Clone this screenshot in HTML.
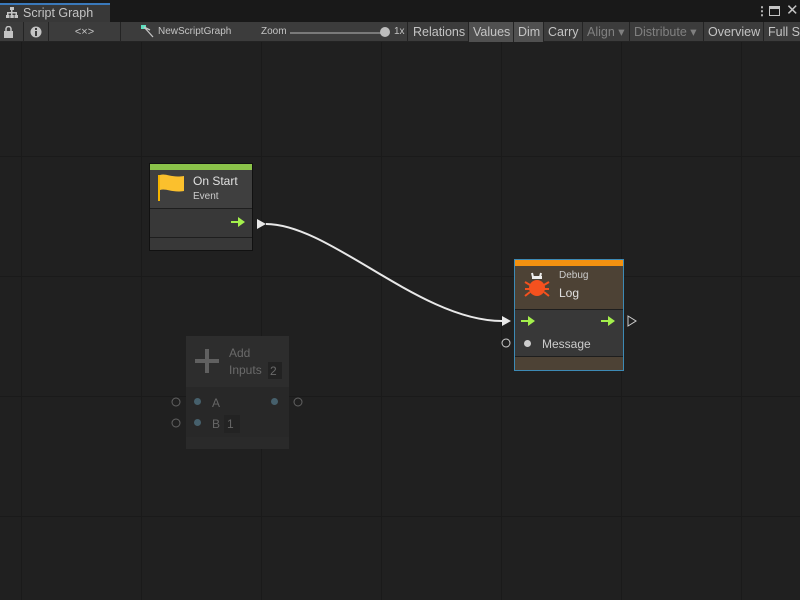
<!DOCTYPE html>
<html><head><meta charset="utf-8"><style>
*{margin:0;padding:0;box-sizing:border-box}
body{width:800px;height:600px;overflow:hidden;background:#202020;font-family:"Liberation Sans",sans-serif;position:relative}
.abs{position:absolute}
#tabbar{left:0;top:0;width:800px;height:22px;background:#191919}
#tab{left:0;top:3px;width:110px;height:19px;background:#383838;border-top:2px solid #3a79bb;color:#c4c4c4;font-size:12.5px;padding:1px 0 0 23px}
#tb{left:0;top:22px;width:800px;height:20px;background:#3c3c3c;border-bottom:1px solid #232323}
.tbt{position:absolute;top:0;height:20px;font-size:12.5px;color:#c4c4c4;line-height:20px;border-right:1px solid #242424;padding:0 0 0 4px}
.on{background:#505050}
.dis{color:#808080}
#canvas{left:0;top:42px;width:800px;height:558px;background-color:#202020;
background-image:linear-gradient(90deg,#1a1a1a 1px,transparent 1px),linear-gradient(#1a1a1a 1px,transparent 1px);
background-size:120px 120px;background-position:21px -6px}
.node{position:absolute;border:1px solid #111}
.t{position:absolute;font-size:12px;color:#e0e0e0}
</style></head><body>
<div id="tabbar" class="abs"></div>
<div id="tab" class="abs">Script Graph</div>
<svg class="abs" style="left:6px;top:7px" width="12" height="12"><g fill="#c4c4c4"><rect x="4" y="0" width="4" height="3"/><rect x="5" y="3" width="1.5" height="3"/><rect x="1" y="5" width="10" height="1.5"/><rect x="1" y="5" width="1.5" height="3"/><rect x="9.5" y="5" width="1.5" height="3"/><rect x="5" y="5" width="1.5" height="3"/><rect x="0" y="8" width="3.5" height="3"/><rect x="4.3" y="8" width="3.5" height="3"/><rect x="8.5" y="8" width="3.5" height="3"/></g></svg>
<div class="abs" style="left:756px;top:4px;color:#c4c4c4;font-size:12px;font-weight:bold">⋮</div>
<div class="abs" style="left:769px;top:6px;width:11px;height:10px;border:1.5px solid #c4c4c4;border-top-width:3px"></div>
<div class="abs" style="left:786px;top:1px;color:#c4c4c4;font-size:15px">✕</div>
<div id="tb" class="abs">
<div class="tbt" style="left:0;width:24px"><svg width="10" height="12" style="margin:4px 0 0 0"><rect x="0" y="5" width="9" height="7" fill="#c4c4c4"/><path d="M2 5V3a2.5 2.5 0 0 1 5 0v2" stroke="#c4c4c4" stroke-width="1.5" fill="none"/></svg></div>
<div class="tbt" style="left:24px;width:25px"><svg width="12" height="12" style="margin:4px 0 0 2px"><circle cx="6" cy="6" r="5.5" fill="#c4c4c4"/><rect x="5" y="5" width="2" height="5" fill="#3c3c3c"/><rect x="5" y="2" width="2" height="2" fill="#3c3c3c"/></svg></div>
<div class="tbt" style="left:49px;width:72px;text-align:center;font-size:11px;padding:0">&lt;×&gt;</div>
<div class="tbt" style="left:121px;width:287px;font-size:10px"></div>
<div class="abs" style="left:158px;top:0;line-height:20px;font-size:10px;color:#c4c4c4">NewScriptGraph</div>
<div class="abs" style="left:261px;top:0;line-height:20px;font-size:10px;color:#c4c4c4">Zoom</div>
<div class="abs" style="left:290px;top:10px;width:95px;height:2px;background:#7a7a7a"></div>
<div class="abs" style="left:380px;top:5px;width:10px;height:10px;border-radius:5px;background:#bdbdbd"></div>
<div class="abs" style="left:394px;top:0;line-height:20px;font-size:10px;color:#c4c4c4">1x</div>
<svg class="abs" style="left:141px;top:3px" width="14" height="13"><rect x="0" y="0" width="5" height="4" fill="#5ee0c0"/><path d="M3 2L12 12M3 2L9 5" stroke="#c4c4c4" stroke-width="1.3"/></svg>
<div class="tbt" style="left:409px;width:60px">Relations</div>
<div class="tbt on" style="left:469px;width:45px">Values</div>
<div class="tbt on" style="left:514px;width:30px">Dim</div>
<div class="tbt" style="left:544px;width:39px">Carry</div>
<div class="tbt dis" style="left:583px;width:47px">Align ▾</div>
<div class="tbt dis" style="left:630px;width:74px">Distribute ▾</div>
<div class="tbt" style="left:704px;width:60px">Overview</div>
<div class="tbt" style="left:764px;border:none">Full S</div>
</div>
<div id="canvas" class="abs"></div>

<svg class="abs" style="left:0;top:0" width="800" height="600">
<path d="M266 224 C 330 224, 420 321, 502 321" stroke="#e8e8e8" stroke-width="2" fill="none"/>
<path d="M257 219L266 224L257 229Z" fill="#e8e8e8"/>
<path d="M502 316L511 321L502 326Z" fill="#e8e8e8"/>
<path d="M628 316L636 321L628 326Z" fill="none" stroke="#ccc"/>
<circle cx="506" cy="343" r="4" fill="none" stroke="#ccc"/>
<g opacity="0.55"><circle cx="176" cy="402" r="4" fill="none" stroke="#999"/><circle cx="176" cy="423" r="4" fill="none" stroke="#999"/><circle cx="298" cy="402" r="4" fill="none" stroke="#999"/></g>
</svg>

<div class="node" style="left:149px;top:163px;width:104px;height:88px;background:#383838">
<div style="height:6px;background:#8bc34a"></div>
<div style="height:39px;background:#3f3f3f;border-bottom:1px solid #1e1e1e"></div>
<div style="height:29px;border-bottom:1px solid #1e1e1e"></div>
</div>
<svg class="abs" style="left:158px;top:173px" width="28" height="28"><path d="M1 2V28" stroke="#f5b400" stroke-width="2"/><path d="M2 2C8 0 13 5 26 3V18C14 20 8 15 2 17Z" fill="#fbc02d"/></svg>
<div class="t" style="left:193px;top:174px">On Start</div>
<div class="t" style="left:193px;top:191px;font-size:10px;color:#ccc">Event</div>
<svg class="abs" style="left:231px;top:217px" width="14" height="10"><path d="M0 4H7V0L14 5L7 10V6H0Z" fill="#a4f04c"/></svg>

<div class="node" style="left:514px;top:259px;width:110px;height:112px;background:#3a3a3a;border-color:#3d8ab5">
<div style="height:6px;background:#f39110"></div>
<div style="height:44px;background:#4d4235;border-bottom:1px solid #1e1e1e"></div>
<div style="height:47px;background:#383838;border-bottom:1px solid #1e1e1e"></div>
<div style="height:13px;background:#4d4235"></div>
</div>
<svg class="abs" style="left:523px;top:272px" width="28" height="26"><path d="M9 1L10 5M18 1L17 5" stroke="#eee" stroke-width="2"/><rect x="9" y="4" width="10" height="3" fill="#eee"/><ellipse cx="14" cy="16" rx="8" ry="8" fill="#f4511e"/><path d="M2 10L7 13M2 17H7M2 24L7 20M26 10L21 13M26 17H21M26 24L21 20" stroke="#f4511e" stroke-width="2"/></svg>
<div class="t" style="left:559px;top:270px;font-size:10px;color:#ccc">Debug</div>
<div class="t" style="left:559px;top:286px">Log</div>
<svg class="abs" style="left:521px;top:316px" width="14" height="10"><path d="M0 4H7V0L14 5L7 10V6H0Z" fill="#a4f04c"/></svg>
<svg class="abs" style="left:601px;top:316px" width="14" height="10"><path d="M0 4H7V0L14 5L7 10V6H0Z" fill="#a4f04c"/></svg>
<div class="abs" style="left:524px;top:340px;width:7px;height:7px;border-radius:4px;background:#ccc"></div>
<div class="t" style="left:542px;top:337px;font-size:12px;color:#ccc">Message</div>

<div class="abs" style="left:186px;top:336px;width:103px;height:113px;background:#2a2a2a">
<div style="height:51px;background:#2d2d2d"></div>
<div style="height:50px;background:#282828"></div>
</div>
<div class="abs" style="left:195px;top:359px;width:24px;height:4px;background:#606060"></div>
<div class="abs" style="left:205px;top:349px;width:4px;height:24px;background:#606060"></div>
<div class="t" style="left:229px;top:346px;color:#6a6a6a">Add</div>
<div class="t" style="left:229px;top:363px;color:#6a6a6a">Inputs</div>
<div class="abs" style="left:268px;top:362px;width:14px;height:17px;background:#222;color:#6a6a6a;font-size:12px;padding:2px 0 0 2px">2</div>
<div class="abs" style="left:194px;top:398px;width:7px;height:7px;border-radius:4px;background:#46606c"></div>
<div class="abs" style="left:194px;top:419px;width:7px;height:7px;border-radius:4px;background:#46606c"></div>
<div class="abs" style="left:271px;top:398px;width:7px;height:7px;border-radius:4px;background:#46606c"></div>
<div class="t" style="left:212px;top:396px;color:#666">A</div>
<div class="t" style="left:212px;top:417px;color:#666">B</div>
<div class="abs" style="left:224px;top:415px;width:16px;height:18px;background:#232323;color:#666;font-size:12px;padding:2px 0 0 3px">1</div>
</body></html>
